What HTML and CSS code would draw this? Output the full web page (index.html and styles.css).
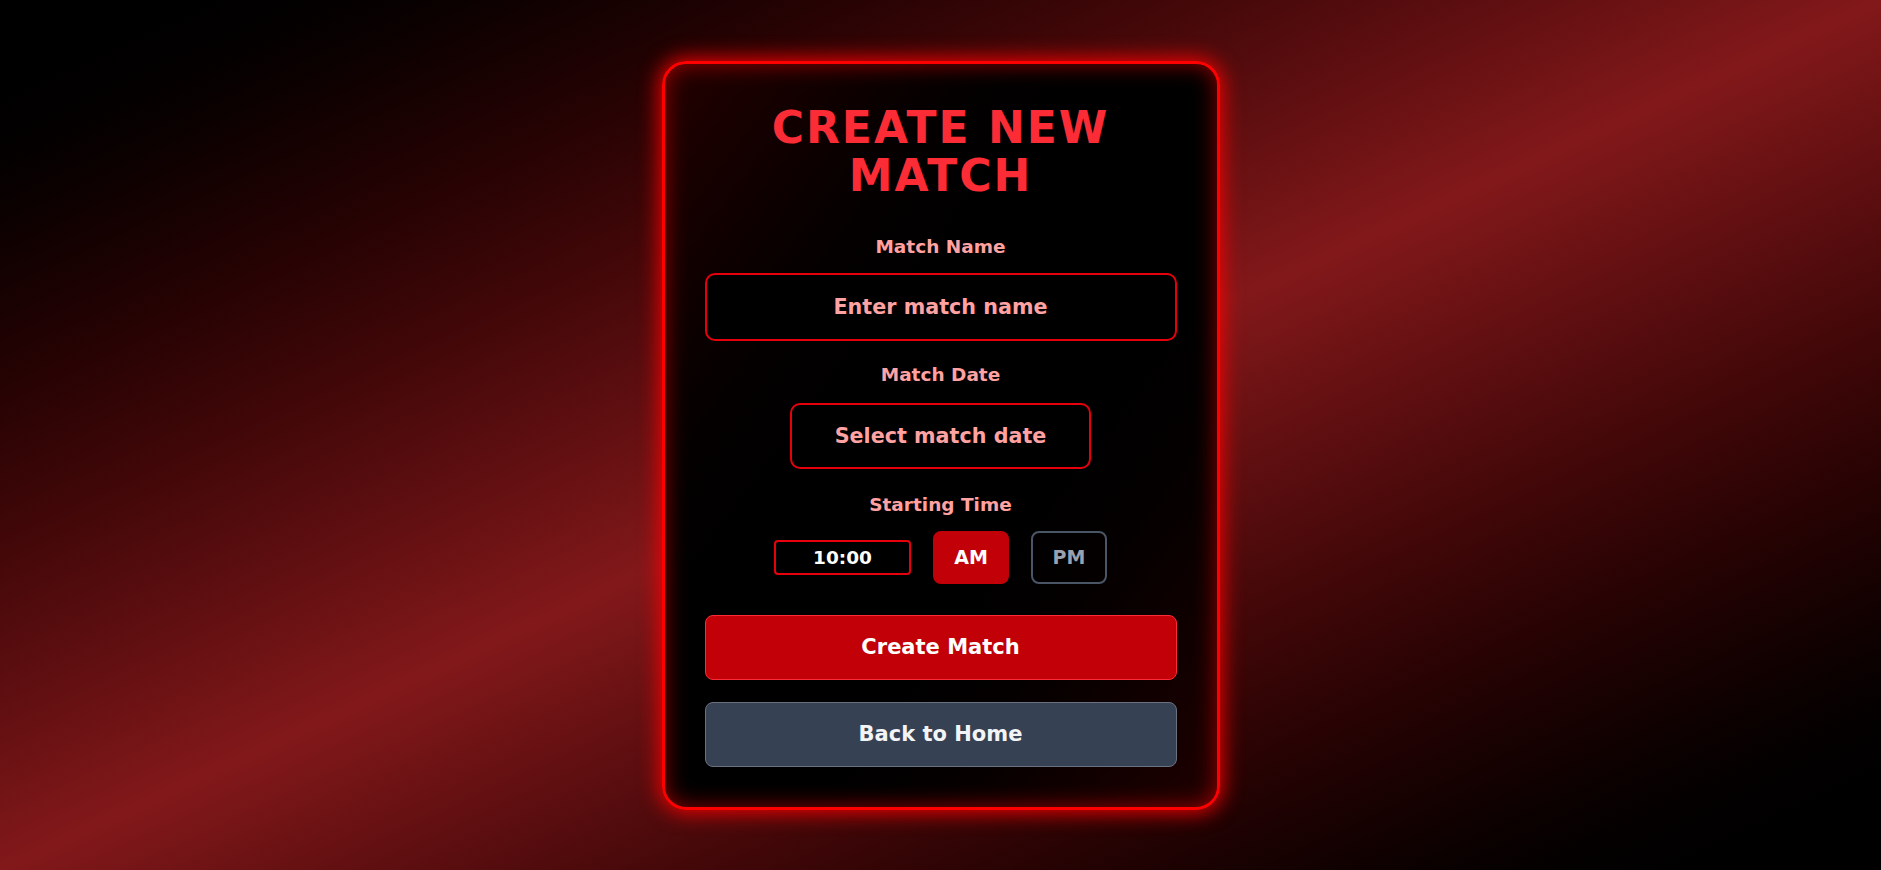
FILE: index.html
```html
<!DOCTYPE html>
<html lang="en">
<head>
<meta charset="utf-8">
<title>Create New Match</title>
<link rel="stylesheet" href="styles.css">
</head>
<body>
<main class="page">
  <section class="card">
    <h1 class="title">Create New Match</h1>
    <div class="field field-name">
      <label class="label" for="name">Match Name</label>
      <input class="input input-wide" id="name" type="text" placeholder="Enter match name">
    </div>
    <div class="field field-date">
      <label class="label label-date" for="date">Match Date</label>
      <input class="input input-date" id="date" type="text" placeholder="Select match date">
    </div>
    <div class="field field-time">
      <label class="label" for="time">Starting Time</label>
      <div class="time-row">
        <input class="time-input" id="time" type="text" value="10:00">
        <button class="period period-active" type="button">AM</button>
        <button class="period" type="button">PM</button>
      </div>
    </div>
    <button class="btn btn-create" type="button">Create Match</button>
    <button class="btn btn-home" type="button">Back to Home</button>
  </section>
</main>
</body>
</html>
```
FILE: styles.css
```css
* { box-sizing: border-box; }
html, body { margin: 0; padding: 0; }
body {
  font-family: "DejaVu Sans", "Liberation Sans", sans-serif;
  font-weight: 700;
  background: linear-gradient(to bottom right in oklab, #000 0%, #82181a 50%, #000 100%);
  min-height: 100vh;
}
.page {
  min-height: 870px;
  display: flex;
  align-items: center;
  justify-content: center;
}
.card {
  width: 558px;
  padding: 40px;
  border: 3px solid #ff0000;
  border-radius: 24px;
  background: linear-gradient(to bottom right in oklab, #240000 0%, #000 50%, #200000 100%);
  box-shadow: 0 0 20px 3px rgba(255, 0, 0, 0.9), inset 0 0 22px rgba(255, 0, 0, 0.55);
  display: flex;
  flex-direction: column;
  align-items: stretch;
  text-align: center;
}
.title {
  margin: 0 0 33px;
  font-size: 44px;
  line-height: 48px;
  font-weight: 700;
  text-transform: uppercase;
  letter-spacing: 2px;
  color: #fb2c36;
}
.label {
  display: block;
  font-size: 18.5px;
  line-height: 28px;
  color: #ffa2a2;
  margin-bottom: 12px;
}
.field-name { margin-bottom: 20px; }
.field-date { margin-bottom: 22px; }
.label-date { margin-bottom: 14px; }
.field-time { margin-bottom: 31px; }
.input {
  display: block;
  font-family: inherit;
  font-weight: 700;
  font-size: 20.7px;
  color: #ffa2a2;
  background: #000;
  border: 2px solid #e7000b;
  border-radius: 10px;
  text-align: center;
  outline: none;
}
.input::placeholder { color: #ffa2a2; opacity: 1; }
.input-wide { width: 100%; height: 68px; }
.input-date { width: 301px; height: 66px; margin: 0 auto; }
.time-row {
  display: flex;
  align-items: center;
  justify-content: center;
  gap: 22px;
  height: 53px;
}
.time-input {
  width: 137px;
  height: 35px;
  font-family: inherit;
  font-weight: 700;
  font-size: 18.5px;
  color: #fff;
  background: #000;
  border: 2px solid #e7000b;
  border-radius: 4px;
  text-align: center;
  outline: none;
}
.period {
  width: 76px;
  height: 53px;
  font-family: inherit;
  font-weight: 700;
  font-size: 19px;
  border-radius: 8px;
  border: 2px solid #4a5565;
  background: transparent;
  color: #99a1af;
}
.period-active {
  background: #c10007;
  border-color: #c10007;
  color: #fff;
}
.btn {
  display: block;
  width: 100%;
  height: 65px;
  font-family: inherit;
  font-weight: 700;
  font-size: 21px;
  color: #fff;
  border-radius: 8px;
}
.btn-create {
  background: #c10007;
  border: 1px solid #fb2c36;
  margin-bottom: 22px;
}
.btn-home {
  background: #364153;
  border: 1px solid #6a7282;
  color: #f3f4f6;
}
```
